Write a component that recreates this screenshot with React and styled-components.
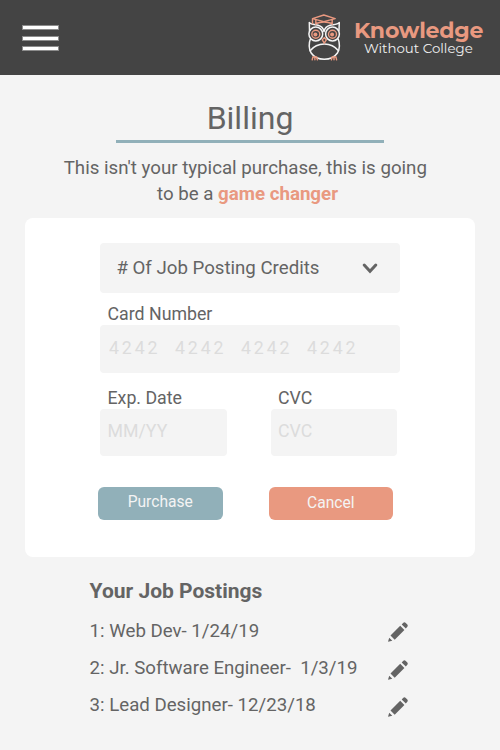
import React from "react";
import styled, { createGlobalStyle } from "styled-components";

const GlobalStyle = createGlobalStyle`
  * { box-sizing: border-box; }
  body {
    margin: 0;
    background: #f4f4f4;
    color: #646464;
    font-family: Roboto, "Liberation Sans", sans-serif;
  }
  h1, h2, p, ul { margin: 0; padding: 0; }
`;

const Page = styled.div`
  width: 500px;
  height: 750px;
  overflow: hidden;
`;

const Header = styled.header`
  display: flex;
  justify-content: space-between;
  align-items: flex-start;
  height: 75px;
  padding: 0 16px 0 22px;
  background: #444444;
`;

const MenuButton = styled.button`
  display: flex;
  flex-direction: column;
  gap: 5.5px;
  margin: 25px 0 0;
  padding: 0;
  border: 0;
  background: none;
`;

const MenuBar = styled.span`
  width: 37px;
  height: 5px;
  background: #ffffff;
  border: 1px solid #8c8c8c;
`;

const Brand = styled.div`
  display: flex;
  width: 177px;
  padding-top: 13px;
`;

const OwlLogo = styled.svg`
  width: 36px;
  height: 50px;
  flex: none;
`;

const BrandText = styled.div`
  margin-left: 11px;
  padding-top: 5px;
  font-family: Montserrat, Inter, sans-serif;
  white-space: nowrap;
`;

const BrandName = styled.div`
  height: 22px;
  color: #e99980;
  font-size: 22px;
  font-weight: 700;
  line-height: 25px;
  letter-spacing: -0.22px;
`;

const BrandTag = styled.div`
  margin-left: 10px;
  color: #f0f0f0;
  font-size: 13.35px;
  font-weight: 400;
  line-height: 16px;
`;

const Title = styled.h1`
  width: 268px;
  height: 44px;
  margin: 24px auto 0;
  border-bottom: 3px solid #91b0b9;
  font-size: 32px;
  font-weight: 400;
  line-height: 38px;
  text-align: center;
`;

const Intro = styled.p`
  margin: 12px 0 11px;
  font-size: 18.7px;
  line-height: 26px;
  text-align: center;
  white-space: nowrap;
`;

const IntroLine = styled.span`
  display: block;
  padding-right: ${(p) => p.$inset}px;
`;

const Accent = styled.strong`
  color: #e99980;
  font-weight: 700;
`;

const Card = styled.form`
  width: 450px;
  height: 339px;
  margin: 0 auto;
  padding: 25px 75px 0;
  border-radius: 8px;
  background: #ffffff;
`;

const CreditSelect = styled.div`
  display: flex;
  align-items: center;
  justify-content: space-between;
  width: 300px;
  height: 50px;
  padding: 0 22px 0 16.4px;
  border-radius: 4px;
  background: #f4f4f4;
  font-size: 18.67px;
`;

const FieldRow = styled.div`
  display: flex;
  gap: 44px;
  margin-top: ${(p) => p.$top}px;
`;

const Field = styled.label`
  display: block;
  width: ${(p) => p.$width}px;
`;

const FieldLabel = styled.span`
  display: block;
  height: 22px;
  padding-left: 7.5px;
  font-size: 17.75px;
  line-height: 22px;
  white-space: nowrap;
`;

const Input = styled.input`
  display: block;
  width: 100%;
  height: ${(p) => p.$height}px;
  padding: 0 8px ${(p) => p.$lift}px ${(p) => p.$indent}px;
  border: 0;
  border-radius: 4px;
  outline: 0;
  background: #f4f4f4;
  font-family: inherit;
  font-size: 17.75px;
  letter-spacing: ${(p) => p.$spacing || 0}px;
  &::placeholder { color: #dcdcdc; opacity: 1; }
`;

const Actions = styled.div`
  display: flex;
  gap: 46px;
  margin: 31px 0 0 -2px;
`;

const Button = styled.button`
  width: 124.5px;
  height: 33px;
  padding: 0 0 ${(p) => p.$lift}px;
  border: 0;
  border-radius: 6px;
  background: ${(p) => p.$color};
  color: #f4f4f4;
  font-family: inherit;
  font-size: 15.6px;
  line-height: 19px;
`;

const Postings = styled.section`
  width: 319.4px;
  margin: 21px 0 0 89.6px;
`;

const PostingsTitle = styled.h2`
  height: 26px;
  font-size: 21px;
  font-weight: 700;
  line-height: 26px;
`;

const PostingList = styled.ul`
  display: grid;
  grid-auto-rows: 37.2px;
  margin-top: 8px;
  list-style: none;
`;

const Posting = styled.li`
  display: flex;
  justify-content: space-between;
  align-items: center;
  font-size: 18.67px;
  white-space: pre;
`;

const PencilIcon = styled.svg`
  width: 20px;
  height: 20px;
  margin: 3.8px 1px 0 0;
  fill: #646464;
`;

const postings = [
  "1: Web Dev- 1/24/19",
  "2: Jr. Software Engineer-  1/3/19",
  "3: Lead Designer- 12/23/18",
];

function Owl() {
  return (
    <OwlLogo viewBox="0 0 36 50" fill="none" strokeLinecap="round" strokeLinejoin="round">
      <g stroke="#f4f4f4" strokeWidth="1.5">
        <path d="M2.5 17.5L2.3 9.5C4 11.7 8 11.5 11 12.2C14.5 13 16.3 15 17 18.5C17.8 15 19.7 13 23.2 12.2C26.5 11.5 30.5 11.7 32.3 9.5L32 17.5" />
        <circle cx="8.8" cy="21" r="6.9" />
        <circle cx="25.5" cy="21" r="6.9" />
        <path d="M3.4 26C1.7 30 1.6 36 4.2 40C7 44.2 12 46.2 17.3 46.2C22.6 46.2 27.6 44.2 30.4 40C33 36 32.9 30 31.2 26" />
        <path d="M3.1 37.8C6.5 33.5 11.5 31 17.3 31C23.1 31 28.1 33.5 31.5 37.8" />
      </g>
      <g stroke="#e99980" strokeWidth="1.4">
        <path d="M5.5 5.6L16.8 2L28.2 5.6L16.8 8.6ZM8.8 7V11.3M25.2 7V11.3M5.5 5.6V10.6M8.8 10.5C13.5 8.7 20.5 8.7 25.2 10.5" />
        <circle cx="8.8" cy="21.2" r="4" />
        <circle cx="25.5" cy="21.2" r="4" />
        <path d="M17.3 24.6L19.3 26.8L17.3 30.2L15.3 26.8Z" />
        <path d="M5.8 44.2L5.2 46.8M7.9 44.2V46.8M9.8 44.2L10.4 46.8M25 44.2L24.4 46.8M27 44.2V46.8M29 44.2L29.6 46.8M5.8 44H9.8M25 44H29" />
      </g>
      <g fill="#e99980">
        <circle cx="8.4" cy="21.5" r="2" />
        <circle cx="25.1" cy="21.5" r="2" />
      </g>
    </OwlLogo>
  );
}

function Chevron() {
  return (
    <svg width="16" height="12" viewBox="0 0 16 12" fill="none">
      <path d="M2.2 3L8 9.2L13.8 3" stroke="#646464" strokeWidth="3" strokeLinecap="round" />
    </svg>
  );
}

function Pencil() {
  return (
    <PencilIcon viewBox="0 0 20 20">
      <path d="M0 19.8L1.2 15.7L4.3 18.7ZM2.5 13.5L12.2 3.8L16.4 8L6.7 17.7ZM13.7 2.4L15.3 .8Q16.5 -.1 17.5 .8L19.3 2.6Q20.2 3.6 19.3 4.7L17.8 6.4Z" />
    </PencilIcon>
  );
}

export default function App() {
  return (
    <Page>
      <GlobalStyle />
      <Header>
        <MenuButton aria-label="Menu">
          <MenuBar />
          <MenuBar />
          <MenuBar />
        </MenuButton>
        <Brand>
          <Owl />
          <BrandText>
            <BrandName>Knowledge</BrandName>
            <BrandTag>Without College</BrandTag>
          </BrandText>
        </Brand>
      </Header>
      <main>
        <Title>Billing</Title>
        <Intro>
          <IntroLine $inset={9.4}>This isn't your typical purchase, this is going</IntroLine>
          <IntroLine $inset={5}>
            to be a <Accent>game changer</Accent>
          </IntroLine>
        </Intro>
        <Card>
          <CreditSelect>
            <span># Of Job Posting Credits</span>
            <Chevron />
          </CreditSelect>
          <FieldRow $top={10}>
            <Field $width={299.5}>
              <FieldLabel>Card Number</FieldLabel>
              <Input
                $height={47.5}
                $lift={2}
                $indent={9}
                $spacing={2.88}
                placeholder="4242  4242  4242  4242"
              />
            </Field>
          </FieldRow>
          <FieldRow $top={14.5}>
            <Field $width={126.5}>
              <FieldLabel>Exp. Date</FieldLabel>
              <Input $height={47} $lift={4} $indent={7.5} placeholder="MM/YY" />
            </Field>
            <Field $width={126.5}>
              <FieldLabel>CVC</FieldLabel>
              <Input $height={47} $lift={4} $indent={7.5} placeholder="CVC" />
            </Field>
          </FieldRow>
          <Actions>
            <Button type="button" $color="#91b0b9" $lift={2}>Purchase</Button>
            <Button type="button" $color="#e99980" $lift={0}>Cancel</Button>
          </Actions>
        </Card>
        <Postings>
          <PostingsTitle>Your Job Postings</PostingsTitle>
          <PostingList>
            {postings.map((posting) => (
              <Posting key={posting}>
                {posting}
                <Pencil />
              </Posting>
            ))}
          </PostingList>
        </Postings>
      </main>
    </Page>
  );
}
